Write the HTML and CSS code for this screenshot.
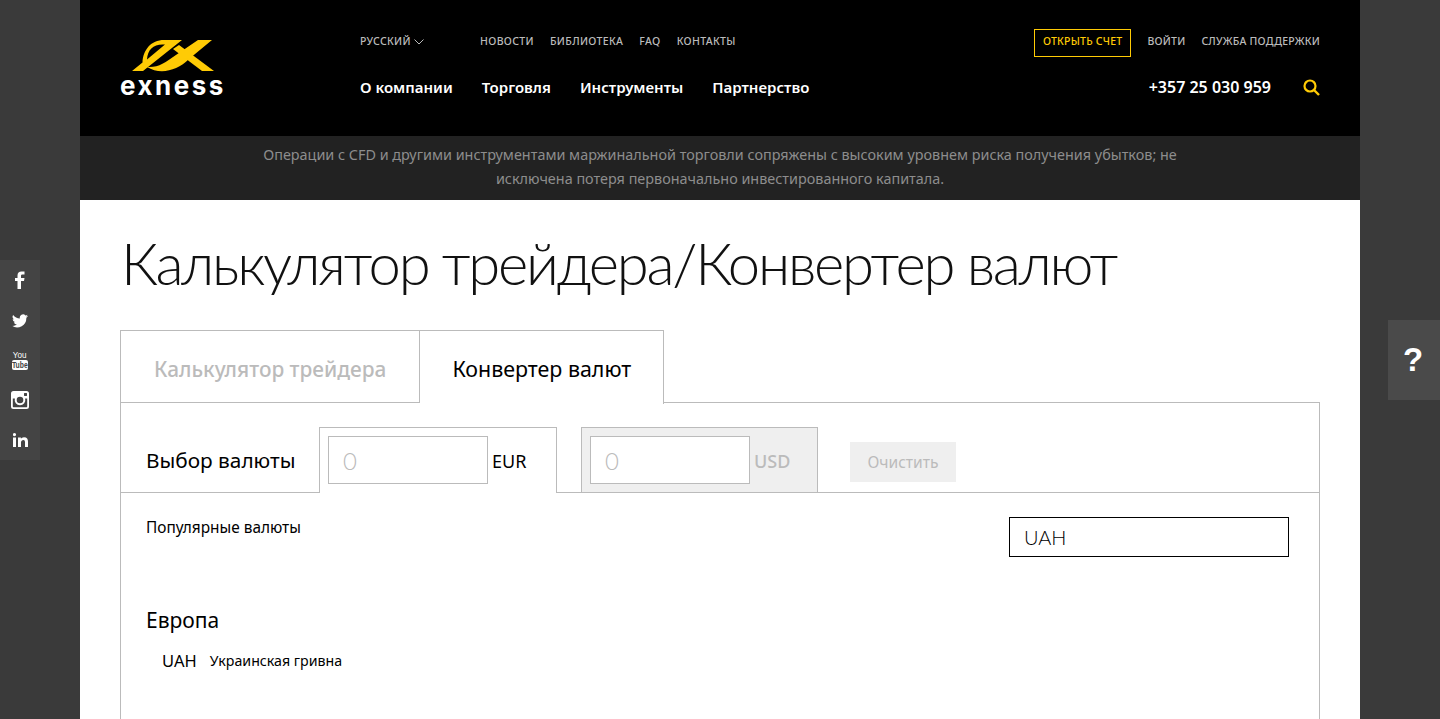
FILE: index.html
```html
<!DOCTYPE html>
<html lang="ru">
<head>
    <meta charset="UTF-8">
    <title>Калькулятор трейдера</title>
    <link rel="stylesheet" href="styles.css">
</head>
<body>

<div class="social">
    <a href="#"><svg width="12" height="18" viewBox="0 0 12 18"><path d="M3.5 18V10H1V7h2.5V4.600C3.500 1.800 5 .5 7.500 .5H10.500V3.500H8.500C7.300 3.500 7 4 7 5V7h3.500L10 10H7v8z" fill="#fff"/></svg></a>
    <a href="#" class="tw"><svg width="16" height="14" viewBox="0 0 24 20"><path d="M24 2.400a9.800 9.800 0 0 1-2.800.8A4.900 4.900 0 0 0 23.300.5a9.800 9.800 0 0 1-3.100 1.200A4.900 4.900 0 0 0 11.800 6.200 13.900 13.900 0 0 1 1.700 1 4.900 4.900 0 0 0 3.200 7.600 4.900 4.900 0 0 1 1 7a4.900 4.900 0 0 0 3.900 4.800 4.900 4.900 0 0 1-2.200.1 4.900 4.900 0 0 0 4.600 3.400A9.900 9.900 0 0 1 0 17.300 13.900 13.900 0 0 0 21.500 5a9.900 9.900 0 0 0 2.500-2.600z" fill="#fff"/></svg></a>
    <a href="#" class="yt"><span class="yt-top">You</span><span class="yt-bottom"><span>Tube</span></span></a>
    <a href="#"><svg width="18" height="18" viewBox="0 0 18 18"><path fill-rule="evenodd" d="M2.500 0h13A2.500 2.500 0 0 1 18 2.500v13a2.500 2.500 0 0 1-2.500 2.500h-13A2.500 2.500 0 0 1 0 15.500v-13A2.500 2.500 0 0 1 2.500 0zM1.800 7.500v7.700c0 .6.400 1 1 1h12.400c.6 0 1-.4 1-1V7.500h-2.100a5.300 5.300 0 1 1-10.200 0zM13.500 2c-.3 0-.5.200-.5.500v2c0 .3.200.5.500.5h2c.3 0 .5-.2.500-.5v-2c0-.3-.2-.5-.5-.5zM9 5.700a3.300 3.300 0 1 0 0 6.600 3.300 3.300 0 0 0 0-6.600z" fill="#fff"/></svg></a>
    <a href="#"><svg width="15" height="14" viewBox="0 0 15 14"><path d="M0 4.500h3V14H0zM1.500 0a1.600 1.600 0 1 1 0 3.200 1.600 1.600 0 0 1 0-3.200zM5 4.500h2.900v1.300C8.400 5 9.500 4.200 11 4.200c3 0 4 1.800 4 4.600V14h-3V9.300c0-1.300-.3-2.400-1.600-2.400S8 8 8 9.300V14H5z" fill="#fff"/></svg></a>
</div>

<a href="#" class="help">?</a>

<div class="page">
    <header class="top">
        <a href="#" class="logo">
            <svg width="82" height="32" viewBox="0 0 82 32">
                <path fill-rule="evenodd" d="M0 31L10.500 22.500C11 10 19 0 32 0H50L11 31zM15 19.500L33 4.500C22 3.500 15.500 9 15 19.500z" fill="#ffcb05"/>
                <path d="M15 27C26 28 34 22 41 17L66 0H80L57 19C45 31 28 35 15 27z" fill="#ffcb05"/>
                <path d="M47 5L82 31H70L41 9z" fill="#ffcb05"/>
            </svg>
            <span class="logo-name">exness</span>
        </a>
        <div class="top-main">
            <div class="top-row small-links">
                <a href="#" class="lang">РУССКИЙ <svg width="10" height="6" viewBox="0 0 10 6"><path d="M.5 .5L5 5L9.500 .5" fill="none" stroke="#bbb"/></svg></a>
                <a href="#">НОВОСТИ</a>
                <a href="#">БИБЛИОТЕКА</a>
                <a href="#">FAQ</a>
                <a href="#">КОНТАКТЫ</a>
            </div>
            <nav class="top-row main-links">
                <a href="#">О компании</a>
                <a href="#">Торговля</a>
                <a href="#">Инструменты</a>
                <a href="#">Партнерство</a>
            </nav>
        </div>
        <div class="top-right">
            <div class="top-row small-links right-links">
                <a href="#" class="open-acc">ОТКРЫТЬ СЧЕТ</a>
                <a href="#">ВОЙТИ</a>
                <a href="#">СЛУЖБА ПОДДЕРЖКИ</a>
            </div>
            <div class="top-row phone-row">
                <span class="phone">+357 25 030 959</span>
                <svg width="17" height="17" viewBox="0 0 17 17"><circle cx="7" cy="7" r="5.500" fill="none" stroke="#ffcb05" stroke-width="2.200"/><path d="M11 11L16 16" stroke="#ffcb05" stroke-width="2.400"/></svg>
            </div>
        </div>
    </header>

    <div class="risk">
        Операции с CFD и другими инструментами маржинальной торговли сопряжены с высоким уровнем риска получения убытков; не<br>
        исключена потеря первоначально инвестированного капитала.
    </div>

    <div class="content">
        <h1>Калькулятор трейдера/Конвертер валют</h1>

        <div class="tabs">
            <a href="#" class="tab">Калькулятор трейдера</a>
            <a href="#" class="tab active">Конвертер валют</a>
        </div>

        <div class="panel">
            <div class="currency-bar">
                <div class="bar-title">Выбор валюты</div>
                <div class="cur-box">
                    <input type="text" placeholder="0">
                    <span>EUR</span>
                </div>
                <div class="cur-box off">
                    <input type="text" placeholder="0">
                    <span>USD</span>
                </div>
                <button class="clear">Очистить</button>
            </div>

            <div class="panel-body">
                <div class="popular-row">
                    <div class="popular">Популярные валюты</div>
                    <input type="text" class="search" value="UAH">
                </div>
                <h3>Европа</h3>
                <div class="cur-line"><span class="code">UAH</span><span>Украинская гривна</span></div>
            </div>
        </div>
    </div>
</div>

</body>
</html>
```
FILE: styles.css
```css
html, body {
    height: 100%;
}
body {
    font-family: "Noto Sans", "Open Sans", sans-serif;
    margin: 0;
    padding: 0;
    background-color: #3a3a3a;
    color: #000;
    overflow: hidden;
}
a {
    text-decoration: none;
    color: inherit;
}
.page {
    width: 1280px;
    margin: 0 auto;
    background: #fff;
    height: 100%;
}

/* header */
.top {
    height: 136px;
    box-sizing: border-box;
    background-color: #000;
    color: #fff;
    padding: 0 40px;
    display: flex;
}
.logo {
    width: 240px;
    padding-top: 40px;
    display: flex;
    flex-direction: column;
    box-sizing: border-box;
}
.logo svg {
    margin-left: 12px;
    display: block;
}
.logo-name {
    font-size: 26px;
    line-height: 28px;
    font-weight: 700;
    letter-spacing: 2.500px;
    color: #fff;
    font-family: "Inter", sans-serif;
}
.top-main {
    padding-top: 29px;
}
.top-row {
    display: flex;
    align-items: center;
}
.small-links {
    height: 24px;
    font-size: 10.500px;
    letter-spacing: .35px;
    color: #bbb;
    font-weight: 500;
    gap: 16px;
}
.lang {
    width: 104px;
}
.main-links {
    margin-top: 20px;
    font-size: 15px;
    font-weight: 600;
    gap: 29px;
    height: 28px;
}
.top-right {
    margin-left: auto;
    padding-top: 29px;
    display: flex;
    flex-direction: column;
    align-items: flex-end;
}
.right-links {
    height: 28px;
    align-items: flex-start;
    line-height: 24px;
    letter-spacing: .22px;
}
.open-acc {
    border: 1px solid #ffcb05;
    color: #ffcb05;
    padding: 0 8px;
    height: 28px;
    line-height: 22px;
    box-sizing: border-box;
}
.phone-row {
    margin-top: 16px;
    gap: 32px;
    height: 28px;
}
.phone {
    font-size: 16px;
    font-weight: 600;
}

.risk {
    background-color: #222;
    color: #8d8d8d;
    height: 64px;
    box-sizing: border-box;
    padding-top: 7px;
    text-align: center;
    font-size: 14.400px;
    line-height: 24px;
}

/* main part */
.content {
    padding: 29px 40px 0;
}
h1 {
    margin: 0 0 33px 1px;
    font-family: "Lato", sans-serif;
    font-size: 58px;
    line-height: 68px;
    font-weight: 300;
    letter-spacing: -2.250px;
    color: #111;
}
.tabs {
    display: flex;
    position: relative;
    z-index: 1;
    height: 72px;
}
.tab {
    border: 1px solid #bbb;
    height: 73px;
    box-sizing: border-box;
    padding: 0 33px;
    font-size: 20.800px;
    line-height: 76px;
    font-weight: 500;
    color: #bbb;
    background: #fff;
}
.tab.active {
    height: 74px;
    border-left: 0;
    border-bottom: 0;
    padding: 0 32px;
    color: #000;
    font-size: 21.400px;
    font-weight: 400;
}
.panel {
    border: 1px solid #bbb;
    border-bottom: 0;
    height: 317px;
    box-sizing: border-box;
}
.currency-bar {
    height: 89px;
    border-bottom: 1px solid #bbb;
    display: flex;
    align-items: flex-end;
    padding-left: 25px;
}
.bar-title {
    font-size: 20.800px;
    width: 173px;
    height: 62px;
    line-height: 60px;
}
.cur-box {
    height: 66px;
    margin-bottom: -1px;
    box-sizing: border-box;
    border: 1px solid #bbb;
    border-bottom: 0;
    background: #fff;
    padding: 8px 8px 0;
    display: flex;
    gap: 4px;
    width: 238px;
    font-size: 18px;
}
.cur-box span {
    line-height: 50px;
}
.cur-box input {
    width: 160px;
    height: 48px;
    box-sizing: border-box;
    border: 1px solid #bbb;
    padding: 0 14px;
    font-family: "Lato", sans-serif;
    font-size: 24px;
    font-weight: 300;
    outline: 0;
    background: #fff;
}
.cur-box input::placeholder {
    color: #bbb;
    opacity: 1;
}
.cur-box.off {
    margin-left: 24px;
    width: 237px;
    margin-bottom: 0;
    height: 65px;
    background: #efefef;
}
.cur-box.off span {
    color: #bbb;
    font-weight: 500;
}
.clear {
    margin: 0 0 10px 32px;
    width: 106px;
    height: 40px;
    border: 0;
    background: #efefef;
    color: #bbb;
    font-family: inherit;
    font-size: 15.600px;
}
.panel-body {
    padding: 25px 30px 0 25px;
}
.popular-row {
    display: flex;
    justify-content: space-between;
    align-items: flex-start;
}
.popular {
    font-size: 15.400px;
    line-height: 20px;
}
.search {
    width: 280px;
    height: 40px;
    margin-top: -1px;
    box-sizing: border-box;
    border: 1px solid #000;
    padding: 0 14px;
    font-family: "Lato", sans-serif;
    font-size: 20px;
    font-weight: 300;
    color: #000;
    outline: 0;
}
h3 {
    margin: 48px 0 0;
    font-size: 21px;
    line-height: 30px;
    font-weight: 400;
}
.cur-line {
    margin-top: 16px;
    padding-left: 16px;
    display: flex;
    gap: 13px;
    font-size: 14.200px;
    line-height: 20px;
}
.code {
    font-size: 16.500px;
}

/* side blocks, fixed over the page */
.social {
    position: fixed;
    left: 0;
    top: 260px;
    width: 40px;
    background: #444;
}
.social a {
    height: 40px;
    display: flex;
    flex-direction: column;
    align-items: center;
    justify-content: center;
}
.tw svg {
    margin-top: 2px;
}
.yt {
    color: #fff;
    font-family: "Liberation Sans", sans-serif;
}
.yt-top {
    font-size: 9px;
    line-height: 8px;
    height: 8px;
    margin-bottom: 1px;
    transform: scaleX(.9);
}
.yt-bottom {
    width: 16px;
    height: 10px;
    background: #fff;
    color: #444;
    border-radius: 2px;
    font-size: 8.500px;
    line-height: 10px;
    font-weight: 700;
    display: flex;
    justify-content: center;
}
.yt-bottom span {
    transform: scaleX(.8);
}
.help {
    position: fixed;
    right: 0;
    top: 320px;
    width: 52px;
    height: 80px;
    box-sizing: border-box;
    padding-right: 2px;
    background: #4a4a4a;
    color: #fff;
    font-family: "Liberation Sans", sans-serif;
    font-size: 33px;
    font-weight: 700;
    line-height: 80px;
    text-align: center;
}
```
